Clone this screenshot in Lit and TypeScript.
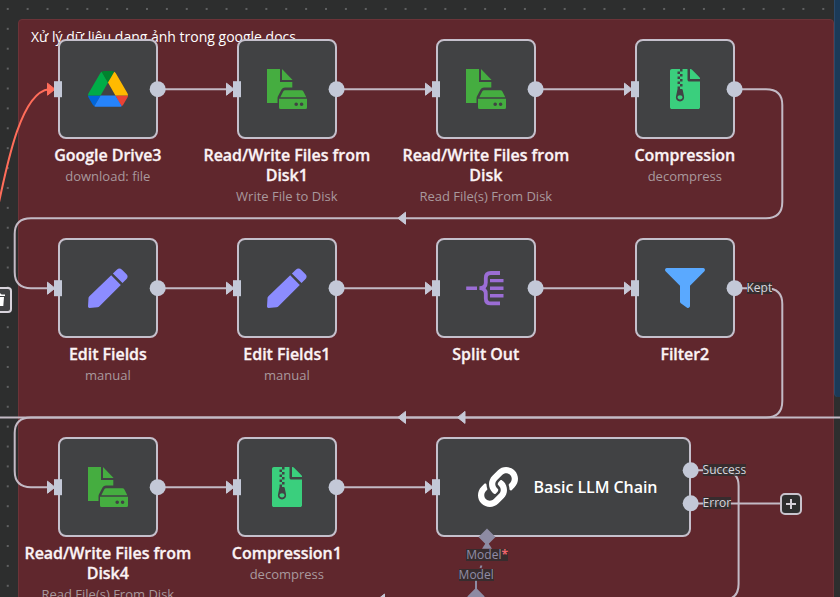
import { LitElement, html, svg, css, type SVGTemplateResult } from "lit";
import { customElement, property } from "lit/decorators.js";
import { styleMap } from "lit/directives/style-map.js";

const icons: Record<string, SVGTemplateResult> = {
  drive: svg`<g transform="translate(0 2.1) scale(.4582)">
    <path d="m6.6 66.85 3.85 6.65c.8 1.4 1.95 2.5 3.3 3.3l13.75-23.8h-27.5c0 1.55.4 3.1 1.2 4.5z" fill="#0066da"/>
    <path d="m43.65 25-13.75-23.8c-1.35.8-2.5 1.9-3.3 3.3l-25.4 44a9.06 9.06 0 0 0-1.2 4.5h27.5z" fill="#00ac47"/>
    <path d="m73.55 76.8c1.35-.8 2.5-1.9 3.3-3.3l1.6-2.75 7.65-13.25c.8-1.4 1.2-2.95 1.2-4.5h-27.5l5.85 11.5z" fill="#ea4335"/>
    <path d="m43.65 25 13.75-23.8c-1.35-.8-2.9-1.2-4.5-1.2h-18.5c-1.6 0-3.15.45-4.5 1.2z" fill="#00832d"/>
    <path d="m59.8 53h-32.3l-13.75 23.8c1.35.8 2.9 1.2 4.5 1.2h50.8c1.6 0 3.15-.45 4.5-1.2z" fill="#2684fc"/>
    <path d="m73.4 26.5-12.7-22c-.8-1.4-1.95-2.5-3.3-3.3l-13.75 23.8 16.15 28h27.45c0-1.55-.4-3.1-1.2-4.5z" fill="#ffba00"/></g>`,
  disk: svg`<g fill="#45ad40">
    <path d="M0 0H13V13H25.3V18.5H18Q15.6 18.5 14.5 20.6L11 27.3Q10.5 28.3 10.5 29.5V34H0Z"/>
    <path d="M15 0L25.6 11H15Z"/>
    <path d="M18.2 21.2H34.4Q35.8 21.2 36.4 22.4L39.3 28.2H13.3L16.2 22.4Q16.8 21.2 18.2 21.2Z"/>
    <path fill-rule="evenodd" d="M12 29.8H40V38.5Q40 40 38.5 40H13.5Q12 40 12 38.5ZM29.2 33.5A1.8 1.8 0 1 0 29.2 37.1A1.8 1.8 0 1 0 29.2 33.5ZM34.6 33.5A1.8 1.8 0 1 0 34.6 37.1A1.8 1.8 0 1 0 34.6 33.5Z"/></g>`,
  zip: svg`<path fill="#3acf7d" transform="translate(5 0) scale(.078125)" d="M377 105L279.1 7c-4.5-4.5-10.6-7-17-7H256v128h128v-6.1c0-6.3-2.5-12.4-7-16.9zM128.4 336c-17.9 0-32.4 12.1-32.4 27 0 15 14.6 27 32.5 27s32.4-12.1 32.4-27-14.6-27-32.5-27zM224 136V0h-63.6v32h-32V0H24C10.7 0 0 10.7 0 24v464c0 13.3 10.7 24 24 24h336c13.3 0 24-10.7 24-24V160H248c-13.2 0-24-10.8-24-24zM95.9 32h32v32h-32zm32.3 384c-33.2 0-58-30.4-51.4-62.9L96.4 256v-32h32v-32h-32v-32h32v-32h-32V96h32V64h32v32h-32v32h32v32h-32v32h32v32h-32v32h22.1c5.7 0 10.7 4.1 11.8 9.7l17.3 87.7c6.4 32.4-18.4 62.6-51.4 62.6z"/>`,
  pen: svg`<g fill="#8c8cff"><path d="M23.2 7.3L32.8 16.9L11.5 38.2Q10.7 39 9.5 39.2L1.4 40Q0 40 0 38.6L.5 30Q.6 28.8 1.4 28.2Z"/>
    <path d="M24.9 5.6L28.8 1.7Q31.4 -.9 34 1.7L38.3 6Q40.9 8.6 38.3 11.2L34.5 15.1Z"/></g>`,
  filter: svg`<path fill="#5aa9ff" transform="scale(.078125)" d="M487.976 0H24.028C2.71 0-8.047 25.866 7.058 40.971L192 225.941V432c0 7.831 3.821 15.17 10.237 19.662l80 55.98C298.02 518.69 320 507.493 320 487.98V225.941l184.947-184.97C520.021 25.896 509.338 0 487.976 0z"/>`,
  split: svg`<g fill="none" stroke="#9b6dd5" stroke-width="3.8"><path d="M.2 20.2H11M24 12.6H37.5M24 20.2H37.5M24 27.8H37.5" stroke-width="3.4"/>
    <path d="M34 5H24.8Q19.8 5 19.8 10V14.5Q19.8 20.2 13.4 20.2Q19.8 20.2 19.8 26V30.4Q19.8 35.4 24.8 35.4H34"/></g>`,
  link: svg`<path fill="#fff" transform="scale(.078125)" d="M326.612 185.391c59.747 59.809 58.927 155.698.36 214.59-.11.12-.24.25-.36.37l-67.2 67.2c-59.27 59.27-155.699 59.262-214.96 0-59.27-59.26-59.27-155.7 0-214.96l37.106-37.106c9.84-9.84 26.786-3.3 27.294 10.606.648 17.722 3.826 35.527 9.69 52.721 1.986 5.822.567 12.262-3.783 16.612l-13.087 13.087c-28.026 28.026-28.905 73.66-1.155 101.96 28.024 28.579 74.086 28.749 102.325.51l67.2-67.19c28.191-28.191 28.073-73.757 0-101.83-3.701-3.694-7.429-6.564-10.341-8.569a16.037 16.037 0 0 1-6.947-12.606c-.396-10.567 3.348-21.456 11.698-29.806l21.054-21.055c5.521-5.521 14.182-6.199 20.584-1.731a152.482 152.482 0 0 1 20.522 17.197zM467.547 44.449c-59.261-59.262-155.69-59.27-214.96 0l-67.2 67.2c-.12.12-.25.25-.36.37-58.566 58.892-59.387 154.781.36 214.59a152.454 152.454 0 0 0 20.521 17.196c6.402 4.468 15.064 3.789 20.584-1.731l21.054-21.055c8.35-8.35 12.094-19.239 11.698-29.806a16.037 16.037 0 0 0-6.947-12.606c-2.912-2.005-6.64-4.875-10.341-8.569-28.073-28.073-28.191-73.639 0-101.83l67.2-67.19c28.239-28.239 74.3-28.069 102.325.51 27.75 28.3 26.872 73.934-1.155 101.96l-13.087 13.087c-4.35 4.35-5.769 10.79-3.783 16.612 5.864 17.194 9.042 34.999 9.69 52.721.509 13.906 17.454 20.446 27.294 10.606l37.106-37.106c59.271-59.259 59.271-155.699.001-214.959z"/>`,
};

interface FlowNode {
  x: number;
  y: number;
  icon: string;
  name: string;
  sub?: string;
  wide?: boolean;
}

const nodes: FlowNode[] = [
  { x: 58, y: 39.4, icon: "drive", name: "Google Drive3", sub: "download: file" },
  { x: 237, y: 39.4, icon: "disk", name: "Read/Write Files from Disk1", sub: "Write File to Disk" },
  { x: 436, y: 39.4, icon: "disk", name: "Read/Write Files from Disk", sub: "Read File(s) From Disk" },
  { x: 635, y: 39.4, icon: "zip", name: "Compression", sub: "decompress" },
  { x: 58, y: 238.4, icon: "pen", name: "Edit Fields", sub: "manual" },
  { x: 237, y: 238.4, icon: "pen", name: "Edit Fields1", sub: "manual" },
  { x: 436, y: 238.4, icon: "split", name: "Split Out" },
  { x: 635, y: 238.4, icon: "filter", name: "Filter2" },
  { x: 58, y: 437.4, icon: "disk", name: "Read/Write Files from Disk4", sub: "Read File(s) From Disk" },
  { x: 237, y: 437.4, icon: "zip", name: "Compression1", sub: "decompress" },
  { x: 436, y: 437.4, icon: "link", name: "Basic LLM Chain", wide: true },
];

@customElement("flow-node")
class FlowNodeElement extends LitElement {
  @property({ attribute: false }) node!: FlowNode;

  static styles = css`
    :host { display: block; width: 99.5px; }
    .box {
      box-sizing: border-box; width: 99.5px; height: 99.5px; border: 2px solid #c5c0cc;
      border-radius: 8px; background: #414244; display: flex; align-items: center; justify-content: center;
    }
    .wide { width: 255px; justify-content: flex-start; padding-left: 39.5px; gap: 16px; }
    svg { width: 40px; height: 40px; flex: none; overflow: visible; }
    .inner { font-size: 16px; font-weight: 600; letter-spacing: -.05px; color: #fff; white-space: nowrap; }
    .caption { width: 180px; margin: 6px -40.2px 0; text-align: center; }
    .name { font-size: 16px; font-weight: 600; letter-spacing: -.04px; -webkit-text-stroke: .3px #fbf3f5; line-height: 20px; color: #fbf3f5; }
    .sub { font-size: 13px; line-height: 18px; margin-top: 2px; color: #a9999d; white-space: nowrap; }
  `;

  render() {
    const n = this.node;
    return html`
      <div class="box ${n.wide ? "wide" : ""}">
        <svg viewBox="0 0 40 40">${icons[n.icon]}</svg>
        ${n.wide ? html`<span class="inner">${n.name}</span>` : ""}
      </div>
      ${n.wide ? "" : html`<div class="caption">
        <div class="name">${n.name}</div>
        ${n.sub ? html`<div class="sub">${n.sub}</div>` : ""}
      </div>`}
    `;
  }
}

const straight: [number, number, number][] = [
  [157, 237, 89.2], [336, 436, 89.2], [535, 635, 89.2],
  [157, 237, 288.2], [336, 436, 288.2], [535, 635, 288.2],
  [157, 237, 487.2], [336, 436, 487.2],
];
const midArrows: [number, number][] = [[402, 218.2], [402, 417.4], [461.5, 417.4], [381, 600]];
const outputs: [number, number][] = [
  [157.7, 89.2], [336.6, 89.2], [535.6, 89.2], [734.6, 89.2],
  [157.7, 288.2], [336.6, 288.2], [535.6, 288.2], [734.6, 288.2],
  [157.7, 487.2], [336.6, 487.2], [690.7, 470.3], [690.7, 503.3],
];
const inputs: [number, number][] = [
  [58, 89.2], [237, 89.2], [436, 89.2], [635, 89.2],
  [58, 288.2], [237, 288.2], [436, 288.2], [635, 288.2],
  [58, 487.2], [237, 487.2], [436, 487.2],
];
const labels = [
  { x: 746.5, y: 280, text: "Kept", kind: "out" },
  { x: 702.6, y: 462, text: "Success", kind: "out" },
  { x: 702.6, y: 495, text: "Error", kind: "out" },
  { x: 466.3, y: 547, text: "Model", kind: "model", required: true },
  { x: 458.6, y: 567, text: "Model", kind: "model" },
];

@customElement("app-root")
class AppRoot extends LitElement {
  static styles = css`
    :host { display: block; font-family: "Open Sans", "Noto Sans", sans-serif; }
    .canvas {
      position: relative; width: 840px; height: 597px; overflow: hidden; background-color: #2d2e2e;
      background-image: radial-gradient(circle at center, #6a6b6c 0, #6a6b6c .6px, transparent 1.2px);
      background-size: 19.9px 19.9px; background-position: -2.2px -1px;
    }
    .sticky, .neighbor, .layer, .item, .label, .trash, .add { position: absolute; }
    .sticky {
      box-sizing: border-box; left: 18px; top: 19px; width: 816px; height: 620px;
      border: 1px solid #6c3338; border-radius: 4px; background: #60272d;
      padding: 7px 12px; font-size: 14px; line-height: 19px; color: #fff; white-space: nowrap;
    }
    .neighbor { left: 834px; top: -10px; width: 20px; height: 407px; background: #1b3a58; border-left: 1px solid #2c4a6b; border-radius: 0 0 0 4px; box-sizing: border-box; }
    .layer { left: 0; top: 0; width: 840px; height: 597px; }
    .label { font-size: 12px; line-height: 16px; white-space: nowrap; color: #d9d5dc; }
    .label span { display: block; line-height: 12px; margin-top: 2px; background: rgba(45, 46, 46, .8); }
    .label .model { color: #918da6; }
    .star { color: #f0646c; }
    .trash, .add { box-sizing: border-box; display: flex; align-items: center; justify-content: center; border: 2px solid #d8d3db; border-radius: 4px; background: #2d2e2e; }
    .trash { left: -14px; top: 287px; width: 26px; height: 26px; background: #414244; }
    .add { left: 779.5px; top: 492.7px; width: 22px; height: 22px; border-color: #c8c3cc; border-radius: 5px; }
  `;

  private edges() {
    return svg`
      <g fill="none" stroke="#c3bac5" stroke-width="2">
        ${straight.map(([a, b, y]) => svg`<path d="M${a} ${y}H${b - 8}"/>`)}
        <path d="M734 89.2H766Q782.3 89.2 782.3 105V202Q782.3 218.2 766 218.2H31Q14.7 218.2 14.7 234V272Q14.7 288.2 31 288.2H49"/>
        <path d="M734 288.2H766Q782.3 288.2 782.3 304V401Q782.3 417.4 766 417.4H31Q14.7 417.4 14.7 433V471Q14.7 487.2 31 487.2H49"/>
        <path d="M0 417.4H840"/>
        <path d="M691 470.3H722Q738.6 470.3 738.6 486V584Q738.6 600 722 600H381"/>
        <path d="M691 503.4H780"/>
        <path d="M487 537V544M481.5 565.5L480.5 568M476 580V597" stroke="#8d8ba3"/>
        <path d="M-3 212C8 158 22 92 49 89.2" stroke="#ff6d5a"/>
      </g>
      <path d="M482 548.8L487 541L492 548.8Z" fill="#8d8ba3"/>
      ${midArrows.map(([x, y]) => svg`<path d="M${x - 4} ${y}L${x + 3.5} ${y - 6}V${y + 6}Z" fill="#c6c8d6" stroke="#c6c8d6" stroke-linejoin="round"/>`)}
      ${inputs.map(([x, y], i) => svg`<path d="M${x - 10.5} ${y - 6}L${x - 3} ${y}L${x - 10.5} ${y + 6}Z" fill="${i ? "#c6c8d6" : "#ff6d5a"}" stroke="${i ? "#c6c8d6" : "#ff6d5a"}" stroke-linejoin="round"/>`)}`;
  }

  private ports() {
    return svg`<g fill="#c3c8d7">
      ${inputs.map(([x, y]) => svg`<rect x="${x - 4}" y="${y - 8}" width="8" height="16"/>`)}
      ${outputs.map(([x, y]) => svg`<circle cx="${x}" cy="${y}" r="8"/>`)}</g>
      <path d="M487 528.5L495.5 537L487 545.5L478.5 537ZM476 587.8L484.7 596.5L476 605L467.3 596.5Z" fill="#8d8ba3"/>`;
  }

  render() {
    return html`<div class="canvas">
      <div class="sticky">Xử lý dữ liệu dạng ảnh trong google docs</div>
      <div class="neighbor"></div>
      <svg class="layer" viewBox="0 0 840 597">${this.edges()}</svg>
      ${labels.map((l) => html`<div class="label" style=${styleMap({ left: `${l.x}px`, top: `${l.y}px` })}><span class=${l.kind}>${l.text}${l.required ? html`<b class="star">*</b>` : ""}</span></div>`)}
      ${nodes.map((n) => html`<flow-node class="item" .node=${n} style=${styleMap({ left: `${n.x}px`, top: `${n.y}px` })}></flow-node>`)}
      <svg class="layer" viewBox="0 0 840 597">${this.ports()}</svg>
      <div class="trash"><svg width="12" height="14" viewBox="0 0 12 14"><path d="M0 1.5H3.5L4.3 .5H7.7L8.5 1.5H12V3H0ZM1 4H11L10.3 13H1.7Z" fill="#fff"/></svg></div>
      <div class="add"><svg width="12" height="12" viewBox="0 0 12 12"><path d="M6 1V11M1 6H11" stroke="#d5d0d8" stroke-width="2"/></svg></div>
    </div>`;
  }
}
